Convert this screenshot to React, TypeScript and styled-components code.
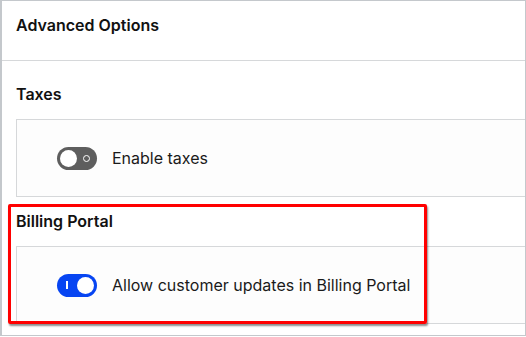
import React from 'react';
import styled, { createGlobalStyle } from 'styled-components';

const GlobalStyle = createGlobalStyle`
  html, body {
    margin: 0;
    padding: 0;
    background: #ffffff;
  }
  body {
    font-family: Inter, "Noto Sans", Roboto, sans-serif;
    color: #111111;
  }
`;

const Frame = styled.div`
  box-sizing: border-box;
  width: 526px;
  height: 336px;
  border: 1px solid #c4c8cc;
  border-left-width: 2px;
  overflow: hidden;
  background: #ffffff;
`;

const Header = styled.div`
  box-sizing: border-box;
  height: 60px;
  padding: 14px 14px 0;
  border-bottom: 1px solid #d6d8da;
`;

const Title = styled.div`
  font-size: 16px;
  font-weight: 600;
  line-height: 20px;
  color: #111111;
`;

const Section = styled.div<{ top: number }>`
  position: relative;
  padding: ${p => p.top}px 0 0 14px;
`;

const SectionTitle = styled.div`
  font-size: 16px;
  font-weight: 600;
  line-height: 20px;
  margin-bottom: 15px;
  color: #111111;
`;

const Card = styled.div`
  box-sizing: border-box;
  width: 560px;
  height: 78px;
  border: 1px solid #d6d8da;
  background: #fdfdfd;
  display: flex;
  align-items: center;
  gap: 15px;
  padding-left: 40px;
`;

const Track = styled.div<{ on: boolean }>`
  box-sizing: border-box;
  width: 40px;
  height: 23px;
  border-radius: 12px;
  padding: 0 3px;
  display: flex;
  align-items: center;
  justify-content: space-between;
  background: ${p => (p.on ? '#0745f2' : '#5e5e5e')};
  flex-shrink: 0;
`;

const Knob = styled.div`
  width: 17px;
  height: 17px;
  border-radius: 50%;
  background: #ffffff;
`;

const OffMark = styled.div`
  width: 5px;
  height: 5px;
  margin-right: 4px;
  border: 1.5px solid #ffffff;
  border-radius: 50%;
`;

const OnMark = styled.div`
  width: 2px;
  height: 8px;
  margin-left: 6px;
  background: #ffffff;
`;

const Label = styled.span`
  font-size: 16px;
  line-height: 20px;
  color: #1a1a1a;
`;

// red annotation box drawn over the billing section
const Highlight = styled.div`
  position: absolute;
  left: 6px;
  top: 7px;
  width: 419px;
  height: 120px;
  box-sizing: border-box;
  border: 3px solid #ff0000;
  border-radius: 2px;
  box-shadow: 1px 2px 2px rgba(0, 0, 0, 0.45);
  pointer-events: none;
`;

const Toggle = ({ on }: { on: boolean }) => (
  <Track on={on}>
    {on ? (
      <>
        <OnMark />
        <Knob />
      </>
    ) : (
      <>
        <Knob />
        <OffMark />
      </>
    )}
  </Track>
);

export default function App() {
  return (
    <>
      <GlobalStyle />
      <Frame>
        <Header>
          <Title>Advanced Options</Title>
        </Header>
        <Section top={23}>
          <SectionTitle>Taxes</SectionTitle>
          <Card>
            <Toggle on={false} />
            <Label>Enable taxes</Label>
          </Card>
        </Section>
        <Section top={14}>
          <SectionTitle>Billing Portal</SectionTitle>
          <Card>
            <Toggle on={true} />
            <Label>Allow customer updates in Billing Portal</Label>
          </Card>
          <Highlight />
        </Section>
      </Frame>
    </>
  );
}
